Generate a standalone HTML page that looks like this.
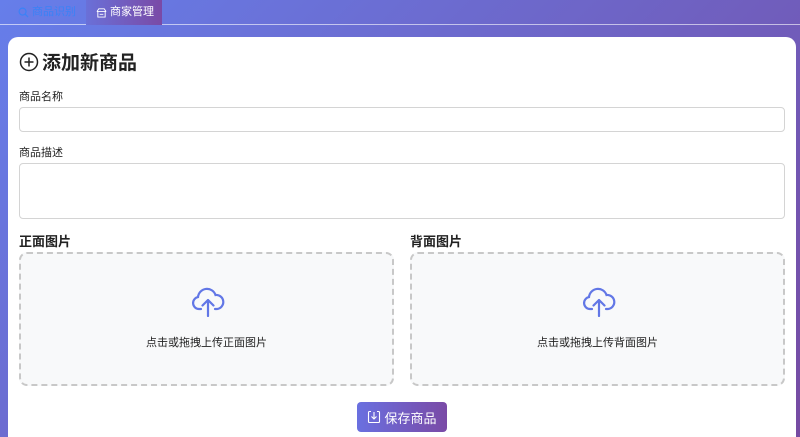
<!DOCTYPE html>
<html><head><meta charset="utf-8"><style>
*{box-sizing:border-box;margin:0;padding:0}
html{width:800px;height:437px;overflow:hidden}
body{width:800px;height:437px;overflow:hidden;background:linear-gradient(135deg,#667eea,#764ba2);font-family:"Liberation Sans","Noto Sans CJK SC",sans-serif;position:relative}
.nav{position:absolute;left:0;top:0;height:25px;width:800px;border-bottom:1px solid rgba(255,255,255,.6)}
.tab{position:absolute;top:0;height:25px;line-height:25px;font-size:11px;display:flex;align-items:center;gap:3px}
.t1{left:18px;color:#3b82f6}
.t2{left:86px;width:76px;padding-left:10px;color:#fff;background:linear-gradient(90deg,#6a70d8,#7a4aa6)}
.card{position:absolute;left:8px;top:37px;width:788px;height:400px;background:#fff;border-radius:10px 10px 0 0}
h2{position:absolute;left:11px;top:11px;font-size:19px;font-weight:bold;color:#222;display:flex;align-items:center;gap:3px}
.lbl{position:absolute;left:11px;font-size:11px;color:#222}
.inp{position:absolute;left:11px;width:766px;border:1px solid #d4d4d4;border-radius:4px;background:#fff}
.sub{position:absolute;font-size:13px;font-weight:bold;color:#222}
.up{position:absolute;top:215px;width:375px;height:134px;border:2px dashed #c8c8c8;border-radius:8px;background:#f8f9fa;text-align:center}
.up svg{position:absolute;left:170px;top:33px}
.up span{position:absolute;left:0;right:0;top:80px;font-size:11px;color:#222}
.btn{position:absolute;left:349px;top:365px;width:90px;height:30px;border-radius:4px;background:linear-gradient(90deg,#6a70e0,#7a4aa6);color:#fff;font-size:13px;display:flex;align-items:center;justify-content:center;gap:3px}
</style></head><body>
<div class="nav">
<div class="tab t1"><svg width="11" height="11" viewBox="0 0 12 12"><circle cx="5" cy="5" r="3.8" fill="none" stroke="#3b82f6" stroke-width="1.3"/><path d="M8 8l3 3" stroke="#3b82f6" stroke-width="1.3"/></svg>商品识别</div>
<div class="tab t2"><svg width="11" height="11" viewBox="0 0 12 12"><path d="M1 5h10M2 5v6h8V5M1 5l2-3h6l2 3M4 8h4" fill="none" stroke="#fff" stroke-width="1"/></svg>商家管理</div>
</div>
<div class="card">
<h2><svg width="20" height="20" viewBox="0 0 20 20"><circle cx="10" cy="10" r="8.5" fill="none" stroke="#222" stroke-width="1.5"/><path d="M10 5.5v9M5.5 10h9" stroke="#222" stroke-width="1.5"/></svg>添加新商品</h2>
<div class="lbl" style="top:51px">商品名称</div>
<div class="inp" style="top:70px;height:25px"></div>
<div class="lbl" style="top:107px">商品描述</div>
<div class="inp" style="top:126px;height:56px"></div>
<div class="sub" style="left:11px;top:194px">正面图片</div>
<div class="sub" style="left:402px;top:194px">背面图片</div>
<div class="up" style="left:11px"><svg width="34" height="30" viewBox="0 0 34 30"><path d="M10 22H8a6 6 0 0 1-1-11.9A9 9 0 0 1 24.5 8 6.5 6.5 0 0 1 26 22h-2" fill="none" stroke="#6277e6" stroke-width="2.2" stroke-linecap="round"/><path d="M17 29V13M11.5 18.5 17 13l5.5 5.5" fill="none" stroke="#6277e6" stroke-width="2.2" stroke-linecap="round" stroke-linejoin="round"/></svg><span>点击或拖拽上传正面图片</span></div>
<div class="up" style="left:402px"><svg width="34" height="30" viewBox="0 0 34 30"><path d="M10 22H8a6 6 0 0 1-1-11.9A9 9 0 0 1 24.5 8 6.5 6.5 0 0 1 26 22h-2" fill="none" stroke="#6277e6" stroke-width="2.2" stroke-linecap="round"/><path d="M17 29V13M11.5 18.5 17 13l5.5 5.5" fill="none" stroke="#6277e6" stroke-width="2.2" stroke-linecap="round" stroke-linejoin="round"/></svg><span>点击或拖拽上传背面图片</span></div>
<div class="btn"><svg width="14" height="14" viewBox="0 0 14 14"><path d="M4 1.5H2.5a1 1 0 0 0-1 1v9a1 1 0 0 0 1 1h9a1 1 0 0 0 1-1v-9a1 1 0 0 0-1-1H10M7 2v7M4.5 6.5 7 9l2.5-2.5" fill="none" stroke="#fff" stroke-width="1.1"/></svg>保存商品</div>
</div>
</body></html>
